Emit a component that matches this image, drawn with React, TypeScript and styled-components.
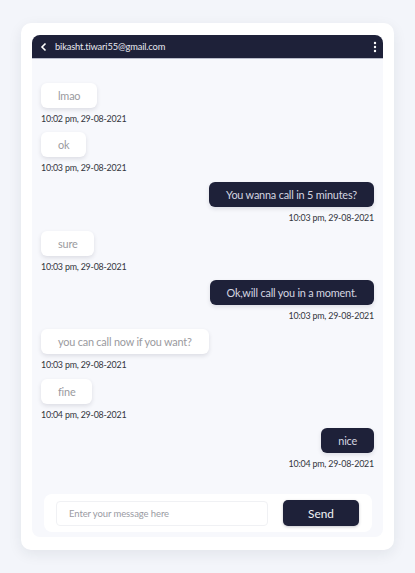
import React from "react";
import styled, { createGlobalStyle } from "styled-components";

const Global = createGlobalStyle`
  html, body { margin: 0; padding: 0; background: #f3f5fa; }
  body { font-family: Lato, "Noto Sans", sans-serif; }
  * { box-sizing: border-box; }
`;

const Page = styled.div`
  padding: 23px 21px 0 21px;
  height: 573px;
`;

const Card = styled.div`
  width: 373px;
  height: 527px;
  background: #ffffff;
  border-radius: 10px;
  box-shadow: 0 4px 14px rgba(30, 33, 57, 0.08);
  padding: 12px 11px 13px 11px;
`;

const Panel = styled.div`
  height: 100%;
  background: #f7f8fc;
  border-radius: 8px;
  display: flex;
  flex-direction: column;
  overflow: hidden;
`;

const Header = styled.div`
  height: 24px;
  background: #1e2139;
  display: flex;
  align-items: center;
  padding: 0 6px 0 8px;
  color: #e8e9f0;
  border-bottom: 1px solid #b9bccb;
`;

const Email = styled.span`
  font-size: 9.3px;
  letter-spacing: -0.15px;
  margin-left: 7px;
  flex: 1;
`;

const Messages = styled.div`
  flex: 1;
  padding: 24px 9px 0 9px;
  display: flex;
  flex-direction: column;
`;

const Group = styled.div<{ $mine?: boolean }>`
  display: flex;
  flex-direction: column;
  align-items: ${(p) => (p.$mine ? "flex-end" : "flex-start")};
  margin-bottom: 7.3px;
`;

const Bubble = styled.div<{ $mine?: boolean }>`
  height: 25px;
  display: flex;
  align-items: center;
  padding: 0 17px;
  border-radius: 6px;
  font-size: 10.9px;
  letter-spacing: -0.2px;
  background: ${(p) => (p.$mine ? "#1e2139" : "#ffffff")};
  color: ${(p) => (p.$mine ? "#d4d6e0" : "#9a9a9e")};
  box-shadow: 0 2px 4px rgba(30, 33, 57, 0.12);
`;

const Stamp = styled.div`
  margin-top: 4px;
  font-size: 8.9px;
  letter-spacing: -0.2px;
  line-height: 13px;
  color: #33353d;
`;

const Footer = styled.div`
  margin: 0 11px 5px 12px;
  background: #ffffff;
  border-radius: 8px;
  height: 38px;
  display: flex;
  align-items: center;
  padding: 0 12px 0 12px;
  gap: 15px;
`;

const Input = styled.input`
  width: 212px;
  height: 25px;
  border: 1px solid #f0f1f4;
  border-radius: 4px;
  padding: 0 12px;
  font-family: Lato, "Noto Sans", sans-serif;
  font-size: 9.5px;
  letter-spacing: -0.1px;
  outline: none;
  &::placeholder { color: #9a9ba3; }
`;

const SendButton = styled.button`
  width: 76px;
  height: 26px;
  border: none;
  border-radius: 5px;
  background: #1e2139;
  color: #f2f3f7;
  font-family: Lato, "Noto Sans", sans-serif;
  font-size: 11.8px;
  box-shadow: 0 1px 3px rgba(30, 33, 57, 0.25);
`;

const messages = [
  { t: "lmao", s: "10:02 pm, 29-08-2021", m: false },
  { t: "ok", s: "10:03 pm, 29-08-2021", m: false },
  { t: "You wanna call in 5 minutes?", s: "10:03 pm, 29-08-2021", m: true },
  { t: "sure", s: "10:03 pm, 29-08-2021", m: false },
  { t: "Ok,will call you in a moment.", s: "10:03 pm, 29-08-2021", m: true },
  { t: "you can call now if you want?", s: "10:03 pm, 29-08-2021", m: false },
  { t: "fine", s: "10:04 pm, 29-08-2021", m: false },
  { t: "nice", s: "10:04 pm, 29-08-2021", m: true },
];

export default function App() {
  return (
    <>
      <Global />
      <Page>
        <Card>
          <Panel>
            <Header>
              <svg width="8" height="10" viewBox="0 0 8 10">
                <path d="M5.5 1.5 L2 5 L5.5 8.5" stroke="#fff" strokeWidth="1.6" fill="none" />
              </svg>
              <Email>bikasht.tiwari55@gmail.com</Email>
              <svg width="4" height="12" viewBox="0 0 4 12">
                <circle cx="2" cy="2" r="1.2" fill="#fff" />
                <circle cx="2" cy="6" r="1.2" fill="#fff" />
                <circle cx="2" cy="10" r="1.2" fill="#fff" />
              </svg>
            </Header>
            <Messages>
              {messages.map((msg, i) => (
                <Group key={i} $mine={msg.m}>
                  <Bubble $mine={msg.m}>{msg.t}</Bubble>
                  <Stamp>{msg.s}</Stamp>
                </Group>
              ))}
            </Messages>
            <Footer>
              <Input placeholder="Enter your message here" />
              <SendButton>Send</SendButton>
            </Footer>
          </Panel>
        </Card>
      </Page>
    </>
  );
}
